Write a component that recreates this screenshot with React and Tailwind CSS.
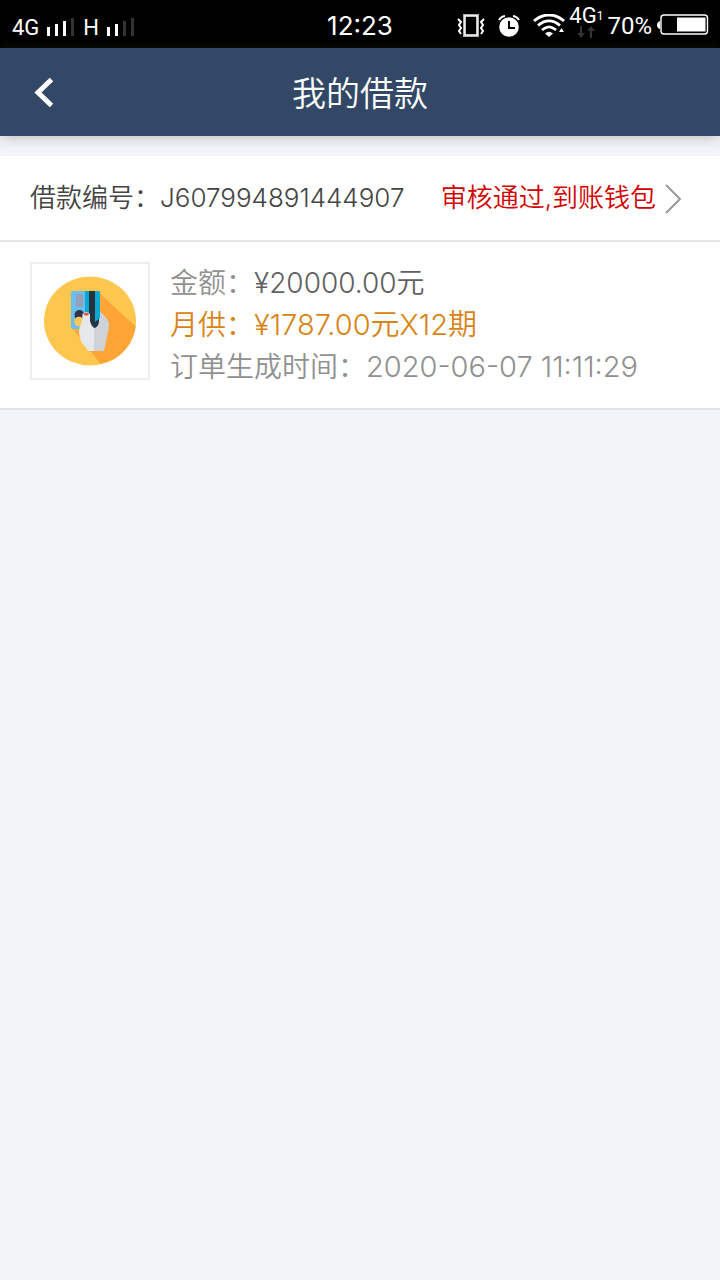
const loans = [
  {
    id: 'J607994891444907',
    status: '审核通过,到账钱包',
    amount: '20000.00',
    monthly: '1787.00',
    months: 12,
    createdAt: '2020-06-07 11:11:29',
  },
];

// Four signal bars, the ones above `level` are dimmed
const SignalBars = ({ level }) => (
  <svg className="h-5 w-7" viewBox="0 0 28 20" aria-hidden="true">
    {[9, 12, 15, 18].map((height, index) => (
      <rect
        key={height}
        x={index * 8}
        y={18 - height}
        width="3"
        height={height}
        fill={index < level ? '#fff' : '#333'}
      />
    ))}
  </svg>
);

const VibrateIcon = () => (
  <svg className="h-6 w-7" viewBox="0 0 28 24" fill="none" aria-hidden="true">
    <rect x="7" y="1" width="14" height="21" stroke="#b0b0b0" strokeWidth="2" />
    <rect x="8" y="2" width="12" height="19" stroke="#fff" strokeWidth="1.5" />
    <path d="M1 5l3 3-2 3 2 3-2 3 2 3M27 5l-3 3 2 3-2 3 2 3-2 3" stroke="#fff" strokeWidth="2" />
  </svg>
);

const AlarmIcon = () => (
  <svg className="h-6 w-6" viewBox="0 0 24 24" fill="none" aria-hidden="true">
    <circle cx="12" cy="13" r="9.800" fill="#fff" />
    <path d="M2 6a8 8 0 0 1 6-4M22 6a8 8 0 0 0-6-4" stroke="#fff" strokeWidth="2" />
    <path d="M12 7v7h6" stroke="#000" strokeWidth="2" />
  </svg>
);

const WifiIcon = () => (
  <svg className="h-6 w-8" viewBox="0 0 32 24" fill="none" aria-hidden="true">
    <g stroke="#fff" strokeWidth="2.8">
      <path d="M1 7C10-1 22-1 31 7" />
      <path d="M5 11.500C12 5.500 20 5.500 27 11.500" />
      <path d="M9 16C13.500 12 18.500 12 23 16" />
    </g>
    <path d="M12 19.500q4-3.500 8 0l-4 3.500z" fill="#fff" />
    <path d="M26 18l2.500-4 2.500 4z" fill="#fff" />
  </svg>
);

const DataArrowsIcon = () => (
  <svg className="h-3 w-5" viewBox="0 0 20 12" fill="#333" aria-hidden="true">
    <path d="M4 0h2v7h3l-4 5-4-5h3zM14 12h2V5h3l-4-5-4 5h3z" />
  </svg>
);

const BatteryIcon = () => (
  <svg className="h-6 w-14" viewBox="0 0 56 24" fill="none" aria-hidden="true">
    <path d="M4 7v8q-3-1-3-4T4 7z" fill="#fff" />
    <rect x="5" y="1" width="46.500" height="19" rx="3" stroke="#fff" strokeWidth="1.400" />
    <rect x="21" y="3.500" width="28.500" height="14" fill="#fff" />
  </svg>
);

const LoanIcon = () => (
  <svg className="h-[90px] w-[92px]" viewBox="0 0 92 90" aria-hidden="true">
    <defs>
      <clipPath id="coin">
        <ellipse cx="46" cy="45" rx="46" ry="44.500" />
      </clipPath>
    </defs>
    <ellipse cx="46" cy="45" rx="46" ry="44.500" fill="#fdc64f" />
    <path d="M55 17L96 54V92H60L29 53Z" fill="#fea535" clipPath="url(#coin)" />
    {/* card */}
    <path d="M29 15H42V53H29Q27 53 27 51V17Q27 15 29 15Z" fill="#68bff0" />
    <path d="M41 15H54Q56 15 56 17V50L48 53H41Z" fill="#08a9d5" />
    <path d="M45 15H51V50H45Z" fill="#27333f" />
    <path d="M32 18H39V31H32Z" fill="#919dbb" />
    <path d="M34.500 18V31M37 18V31" stroke="#a7a5b8" strokeWidth="0.700" />
    <circle cx="35.500" cy="39" r="5" fill="#303645" />
    <circle cx="35" cy="45.500" r="4.800" fill="#fbc65b" />
    {/* hand */}
    <path d="M55 35Q67 44 65 51L60 75H50V52Q55 50 55 45Z" fill="#cfd2d7" />
    <path d="M38.500 38Q42 34 46 38L47 46Q48 51 50 52V75H44Q42 71 38 67Q35 61 35 53L38 46Z" fill="#e7e8eb" />
    <path d="M46 38V15H51H55V44Q55 50 51 52Q47 50 46 45Z" fill="#27333f" />
    <path d="M51 15H54Q56 15 56 17V42L51 46Z" fill="#08a9d5" />
    <path d="M39.500 38Q42 35 45 38L44 39.500H40.500Z" fill="#dc5351" />
  </svg>
);

const StatusBar = () => (
  <div className="grid h-12 grid-cols-[1fr_auto_1fr] items-center bg-black px-3 pt-1 text-white">
    <div className="flex items-center pt-1 font-[Roboto,sans-serif] text-[22px] leading-6">
      <span>4G</span>
      <span className="ml-2"><SignalBars level={3} /></span>
      <span className="ml-2">H</span>
      <span className="ml-2"><SignalBars level={2} /></span>
    </div>
    <time className="text-[26px] leading-8">12:23</time>
    <div className="flex items-center justify-end">
      <VibrateIcon />
      <span className="ml-3"><AlarmIcon /></span>
      <span className="ml-3"><WifiIcon /></span>
      <div className="ml-1 flex flex-col items-center pb-2 font-[Roboto,sans-serif]">
        <div className="flex items-center text-[22px] leading-5">
          4G<span className="text-xs">1</span>
        </div>
        <DataArrowsIcon />
      </div>
      <span className="mx-1 font-[Roboto,sans-serif] text-2xl leading-8">70%</span>
      <span className="-mr-1"><BatteryIcon /></span>
    </div>
  </div>
);

const Header = () => (
  <header className="grid h-22 grid-cols-[1fr_auto_1fr] items-center bg-[#334866] px-8 text-white shadow-[0_2px_12px_rgba(80,80,50,0.3)]">
    <button type="button" aria-label="返回" className="justify-self-start">
      <svg className="h-8 w-6" viewBox="0 0 24 32" fill="none" aria-hidden="true">
        <path d="M19.500 3.500L6 16.500L19.500 29.500" stroke="#fff" strokeWidth="5" />
      </svg>
    </button>
    <h1 className="pt-1 text-[34px] leading-10 font-[350]">我的借款</h1>
  </header>
);

const LoanItem = ({ loan }) => (
  <article className="bg-white">
    <a
      href={`#${loan.id}`}
      className="flex h-[86px] items-center justify-between border-b-2 border-[#e5e5e5] pr-9 pl-[30px] text-[26px] leading-8 font-[350]"
    >
      <span className="text-[#444]">借款编号：{loan.id}</span>
      <span className="flex items-center gap-2 text-[#d20000]">
        {loan.status}
        <svg className="h-8 w-5" viewBox="0 0 20 32" fill="none" aria-hidden="true">
          <path d="M2 3L16 17L2 31" stroke="#999" strokeWidth="2" />
        </svg>
      </span>
    </a>
    <div className="flex gap-5 border-b-2 border-[#e2e3e5] px-[30px] py-5">
      <div className="flex h-[118px] w-[120px] shrink-0 items-center justify-center border-2 border-[#eee]">
        <LoanIcon />
      </div>
      <div className="text-[28px] leading-[42px] font-[350] text-[#909090]">
        <p>金额：<span className="text-[#606060]">¥{loan.amount}元</span></p>
        <p className="text-[#d88414]">月供：<span className="text-[29px]">¥{loan.monthly}元X{loan.months}期</span></p>
        <p>订单生成时间：<span className="text-[29px]">{loan.createdAt}</span></p>
      </div>
    </div>
  </article>
);

export default function App() {
  return (
    <div lang="zh-CN" className="min-h-screen bg-[#f3f4f9] font-['Inter','Noto_Sans_CJK_SC',sans-serif]">
      <StatusBar />
      <Header />
      <main className="pt-5">
        {loans.map((loan) => (
          <LoanItem key={loan.id} loan={loan} />
        ))}
      </main>
    </div>
  );
}
